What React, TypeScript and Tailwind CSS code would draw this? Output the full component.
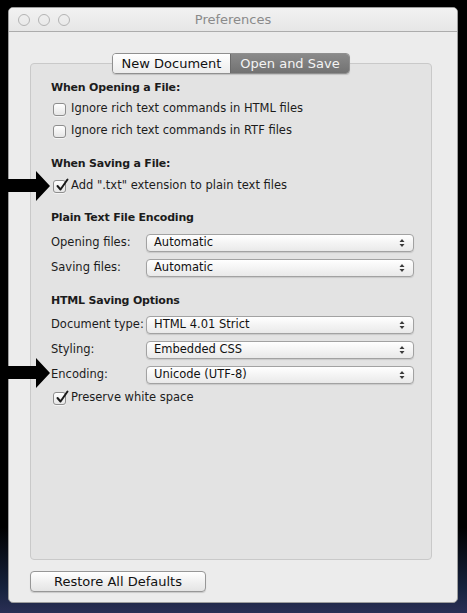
import React from "react";

const font = { fontFamily: '"DejaVu Sans", "Liberation Sans", sans-serif' };

function Checkbox({ checked }: { checked?: boolean }) {
    return (
        <span className="relative flex h-[13px] w-[13px] shrink-0 items-center justify-center rounded-[3px] border border-[#8e8e8e] bg-[linear-gradient(to_bottom,#ffffff,#e6e6e6)] shadow-[0_1px_0_rgba(255,255,255,0.6)]">
            {checked && (
                <svg width="14" height="14" viewBox="0 0 14 14" className="absolute -top-[3px] left-[1px]">
                    <path d="M2.5 8 L5.5 11.5 L12.5 1.5" fill="none" stroke="#1a1a1a" strokeWidth="2" strokeLinecap="round" strokeLinejoin="round" />
                </svg>
            )}
        </span>
    );
}

function CheckRow({ label, checked, className = "" }: { label: string; checked?: boolean; className?: string }) {
    return (
        <div className={`flex h-[22px] items-center pl-[2px] ${className}`}>
            <Checkbox checked={checked} />
            <span className="ml-[5px] whitespace-nowrap text-[11.5px] text-[#1c1c1c]">{label}</span>
        </div>
    );
}

function Heading({ children, className = "" }: { children: React.ReactNode; className?: string }) {
    return (
        <div className={`flex h-[18px] items-center whitespace-nowrap text-[11px] font-bold tracking-[-0.2px] text-[#1c1c1c] ${className}`}>
            {children}
        </div>
    );
}

function Popup({ label, value, className = "" }: { label: string; value: string; className?: string }) {
    return (
        <div className={`flex h-[25px] items-center ${className}`}>
            <span className="w-[95px] shrink-0 whitespace-nowrap text-[11.5px] text-[#1c1c1c]">{label}</span>
            <div className="flex h-[18px] w-[268px] shrink-0 items-center justify-between rounded-[4px] border border-[#a2a2a2] bg-[linear-gradient(to_bottom,#ffffff,#f4f4f4_50%,#e9e9e9)] pl-[7px] pr-[8px] shadow-[0_1px_1px_rgba(0,0,0,0.12)]">
                <span className="whitespace-nowrap text-[11.5px] text-[#111]">{value}</span>
                <svg width="6" height="10" viewBox="0 0 6 10">
                    <path d="M0.5 4 L3 1 L5.5 4 Z" fill="#3a3a3a" />
                    <path d="M0.5 6 L3 9 L5.5 6 Z" fill="#3a3a3a" />
                </svg>
            </div>
        </div>
    );
}

function Arrow({ top }: { top: number }) {
    return (
        <svg
            width="52"
            height="30"
            viewBox="0 0 52 30"
            className="absolute left-0"
            style={{ top }}
        >
            <polygon points="0,8 36,8 36,0 50,15 36,30 36,21 0,21" fill="#000" />
        </svg>
    );
}

export default function App() {
    return (
        <div
            className="relative h-[613px] w-[467px] overflow-hidden bg-[linear-gradient(to_bottom,#000_0%,#000_86%,#16223d_96%,#2a2f55_100%)] pl-[8px] pt-[7px]"
            style={font}
        >
            {/* Window */}
            <div className="flex h-[596px] w-[450px] flex-col overflow-hidden rounded-[5px] border border-[#9d9d9d] bg-[#ececec]">
                {/* Title bar */}
                <div className="relative flex h-[24px] shrink-0 items-center border-b border-[#acacac] bg-[linear-gradient(to_bottom,#f2f2f2,#e6e6e6)]">
                    <div className="flex items-center gap-[8px] pl-[9px]">
                        <span className="h-[12px] w-[12px] rounded-full border border-[#b4b4b4]" />
                        <span className="h-[12px] w-[12px] rounded-full border border-[#b4b4b4]" />
                        <span className="h-[12px] w-[12px] rounded-full border border-[#b4b4b4]" />
                    </div>
                    <span className="absolute inset-x-0 text-center text-[13px] text-[#8a8a8a]">Preferences</span>
                </div>

                {/* Body */}
                <div className="flex flex-1 flex-col pl-[21px] pt-[21px]">
                    {/* Tabs */}
                    <div className="relative z-10 flex w-[402px] justify-center">
                        <div className="flex h-[21px] overflow-hidden rounded-[4px] border border-[#8f8f8f] shadow-[0_1px_1px_rgba(0,0,0,0.15)]">
                            <div className="flex w-[117px] items-center justify-center bg-[linear-gradient(to_bottom,#ffffff,#ececec)] text-[13px] text-[#111]">
                                New Document
                            </div>
                            <div className="flex w-[119px] items-center justify-center border-l border-[#6a6a6a] bg-[linear-gradient(to_bottom,#8a8a8a,#727272)] text-[13px] text-[#f4f4f4]">
                                Open and Save
                            </div>
                        </div>
                    </div>

                    {/* Group box */}
                    <div className="-mt-[11px] flex h-[497px] w-[402px] flex-col rounded-[4px] border border-[#c9c9c9] bg-[#e3e3e3] pl-[20px] pt-[15px]">
                        <Heading>When Opening a File:</Heading>
                        <CheckRow label="Ignore rich text commands in HTML files" className="mt-[1px]" />
                        <CheckRow label="Ignore rich text commands in RTF files" />

                        <Heading className="mt-[13px]">When Saving a File:</Heading>
                        <CheckRow label='Add ".txt" extension to plain text files' checked className="mt-[2px]" />

                        <Heading className="mt-[12px]">Plain Text File Encoding</Heading>
                        <Popup label="Opening files:" value="Automatic" className="mt-[3px]" />
                        <Popup label="Saving files:" value="Automatic" />

                        <Heading className="mt-[12px]">HTML Saving Options</Heading>
                        <Popup label="Document type:" value="HTML 4.01 Strict" className="mt-[2px]" />
                        <Popup label="Styling:" value="Embedded CSS" />
                        <Popup label="Encoding:" value="Unicode (UTF-8)" />
                        <CheckRow label="Preserve white space" checked />
                    </div>

                    {/* Restore button */}
                    <div className="mt-[11px]">
                        <button className="flex h-[21px] w-[176px] items-center justify-center rounded-[4px] border border-[#979797] bg-[linear-gradient(to_bottom,#ffffff,#f1f1f1_50%,#e4e4e4)] text-[13px] text-[#111] shadow-[0_1px_1px_rgba(0,0,0,0.15)]">
                            Restore All Defaults
                        </button>
                    </div>
                </div>
            </div>

            {/* Annotation arrows */}
            <Arrow top={171} />
            <Arrow top={358} />
        </div>
    );
}
